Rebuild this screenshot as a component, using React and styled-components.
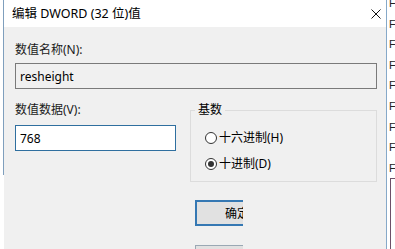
import React from 'react';
import styled, { createGlobalStyle } from 'styled-components';

const GlobalStyle = createGlobalStyle`
  html, body {
    margin: 0;
    padding: 0;
    background: #ffffff;
  }
  body {
    font-family: "Noto Sans", "Noto Sans CJK SC", sans-serif;
    font-size: 12px;
    color: #000;
  }
`;

const Page = styled.div`
  display: flex;
  align-items: flex-start;
  width: 395px;
  height: 249px;
  overflow: hidden;
  background: #ffffff;
  padding-left: 3px;
  box-sizing: border-box;
`;

const EdgeLine = styled.div`
  flex: 0 0 1px;
  height: ${(p) => p.$height}px;
  background: ${(p) => p.$color};
`;

const Dialog = styled.div`
  flex: 0 0 382px;
  align-self: stretch;
  display: flex;
  flex-direction: column;
  overflow: hidden;
  background: #f0f0f0;
`;

const TitleBar = styled.div`
  flex-shrink: 0;
  display: flex;
  align-items: center;
  justify-content: space-between;
  height: 27px;
  padding: 0 5px 0 8px;
  background: #ffffff;
  font-size: 12.5px;
  line-height: 16px;
`;

const Body = styled.div`
  flex-shrink: 0;
  display: flex;
  flex-direction: column;
  padding: 0 9px 0 11px;
`;

const Label = styled.div`
  height: 16px;
  line-height: 16px;
  margin-top: ${(p) => p.$top || 0}px;
  color: #1a1a1a;
`;

const TextBox = styled.div`
  box-sizing: border-box;
  height: 26px;
  margin-top: ${(p) => p.$top || 0}px;
  display: flex;
  align-items: center;
  padding-left: 4px;
  border: 1px solid ${(p) => (p.$active ? '#2f6f9f' : '#7a7a7a')};
  background: ${(p) => (p.$active ? '#ffffff' : '#f0f0f0')};
  font-size: 12px;
`;

const Row = styled.div`
  display: grid;
  grid-template-columns: 161px 1fr;
  column-gap: 14px;
  margin-top: 13px;
`;

const Column = styled.div`
  display: flex;
  flex-direction: column;
`;

const Group = styled.fieldset`
  margin: 0;
  padding: 12px 0 9px 14px;
  border: 1px solid #dcdcdc;
  display: flex;
  flex-direction: column;
  gap: 10px;
  min-width: 0;
`;

const Legend = styled.legend`
  padding: 0 3px;
  margin-left: -10px;
  line-height: 16px;
  height: 16px;
`;

const RadioRow = styled.label`
  display: flex;
  align-items: center;
  gap: 2px;
  height: 16px;
  line-height: 16px;
`;

const RadioCircle = styled.span`
  box-sizing: border-box;
  width: 12px;
  height: 12px;
  border-radius: 50%;
  border: 1px solid #333333;
  background: #ffffff;
  display: flex;
  align-items: center;
  justify-content: center;

  &::after {
    content: '';
    width: 6px;
    height: 6px;
    border-radius: 50%;
    background: ${(p) => (p.$checked ? '#333333' : 'transparent')};
  }
`;

const ButtonRow = styled.div`
  display: flex;
  padding-left: 180px;
  margin-top: ${(p) => p.$top}px;
`;

const ButtonClip = styled.div`
  width: 48px;
  height: 26px;
  overflow: hidden;
  flex: 0 0 auto;
`;

const Button = styled.div`
  box-sizing: border-box;
  width: 84px;
  height: 26px;
  display: flex;
  align-items: center;
  justify-content: center;
  background: #e1e1e1;
  border: ${(p) => (p.$primary ? '2px solid #3578b3' : '1px solid #9aa8b4')};
  font-size: 12px;
`;

const BackWindow = styled.div`
  flex: 1;
  align-self: stretch;
  display: flex;
  flex-direction: column;
  padding-left: 2px;
  background: #ffffff;
  overflow: hidden;
`;

const BackLines = styled.div`
  flex-shrink: 0;
  margin-top: -7px;
  display: flex;
  flex-direction: column;
`;

const BackItem = styled.div`
  height: 20.6px;
  line-height: 20.6px;
  font-family: "Liberation Sans", sans-serif;
  font-size: 11px;
  color: #222;
`;

const BackBox = styled.div`
  margin-left: 1px;
  flex: 1;
  border-left: 1px solid #6d5068;
  border-top: 1px solid #6d5068;
`;

function CloseIcon() {
  return (
    <svg width="10" height="10" viewBox="0 0 10 10">
      <path d="M0.5 0.5 L9.5 9.5 M9.5 0.5 L0.5 9.5" stroke="#111" strokeWidth="1" fill="none" />
    </svg>
  );
}

export default function App() {
  return (
    <>
      <GlobalStyle />
      <Page>
        <EdgeLine $color="#7f9fbd" $height={175} />
        <Dialog>
          <TitleBar>
            <span>编辑 DWORD (32 位)值</span>
            <CloseIcon />
          </TitleBar>
          <Body>
            <Label $top={15}>数值名称(N):</Label>
            <TextBox $top={5}>resheight</TextBox>
            <Row>
              <Column>
                <Label>数值数据(V):</Label>
                <TextBox $top={7} $active>768</TextBox>
              </Column>
              <Group>
                <Legend>基数</Legend>
                <RadioRow>
                  <RadioCircle />
                  十六进制(H)
                </RadioRow>
                <RadioRow>
                  <RadioCircle $checked />
                  十进制(D)
                </RadioRow>
              </Group>
            </Row>
            <ButtonRow $top={18}>
              <ButtonClip>
                <Button $primary>确定</Button>
              </ButtonClip>
            </ButtonRow>
            <ButtonRow $top={19}>
              <ButtonClip>
                <Button />
              </ButtonClip>
            </ButtonRow>
          </Body>
        </Dialog>
        <EdgeLine $color="#86a9c9" $height={249} />
        <BackWindow>
          <BackLines>
            {Array.from({ length: 9 }).map((_, i) => (
              <BackItem key={i}>F</BackItem>
            ))}
          </BackLines>
          <BackBox />
        </BackWindow>
      </Page>
    </>
  );
}
